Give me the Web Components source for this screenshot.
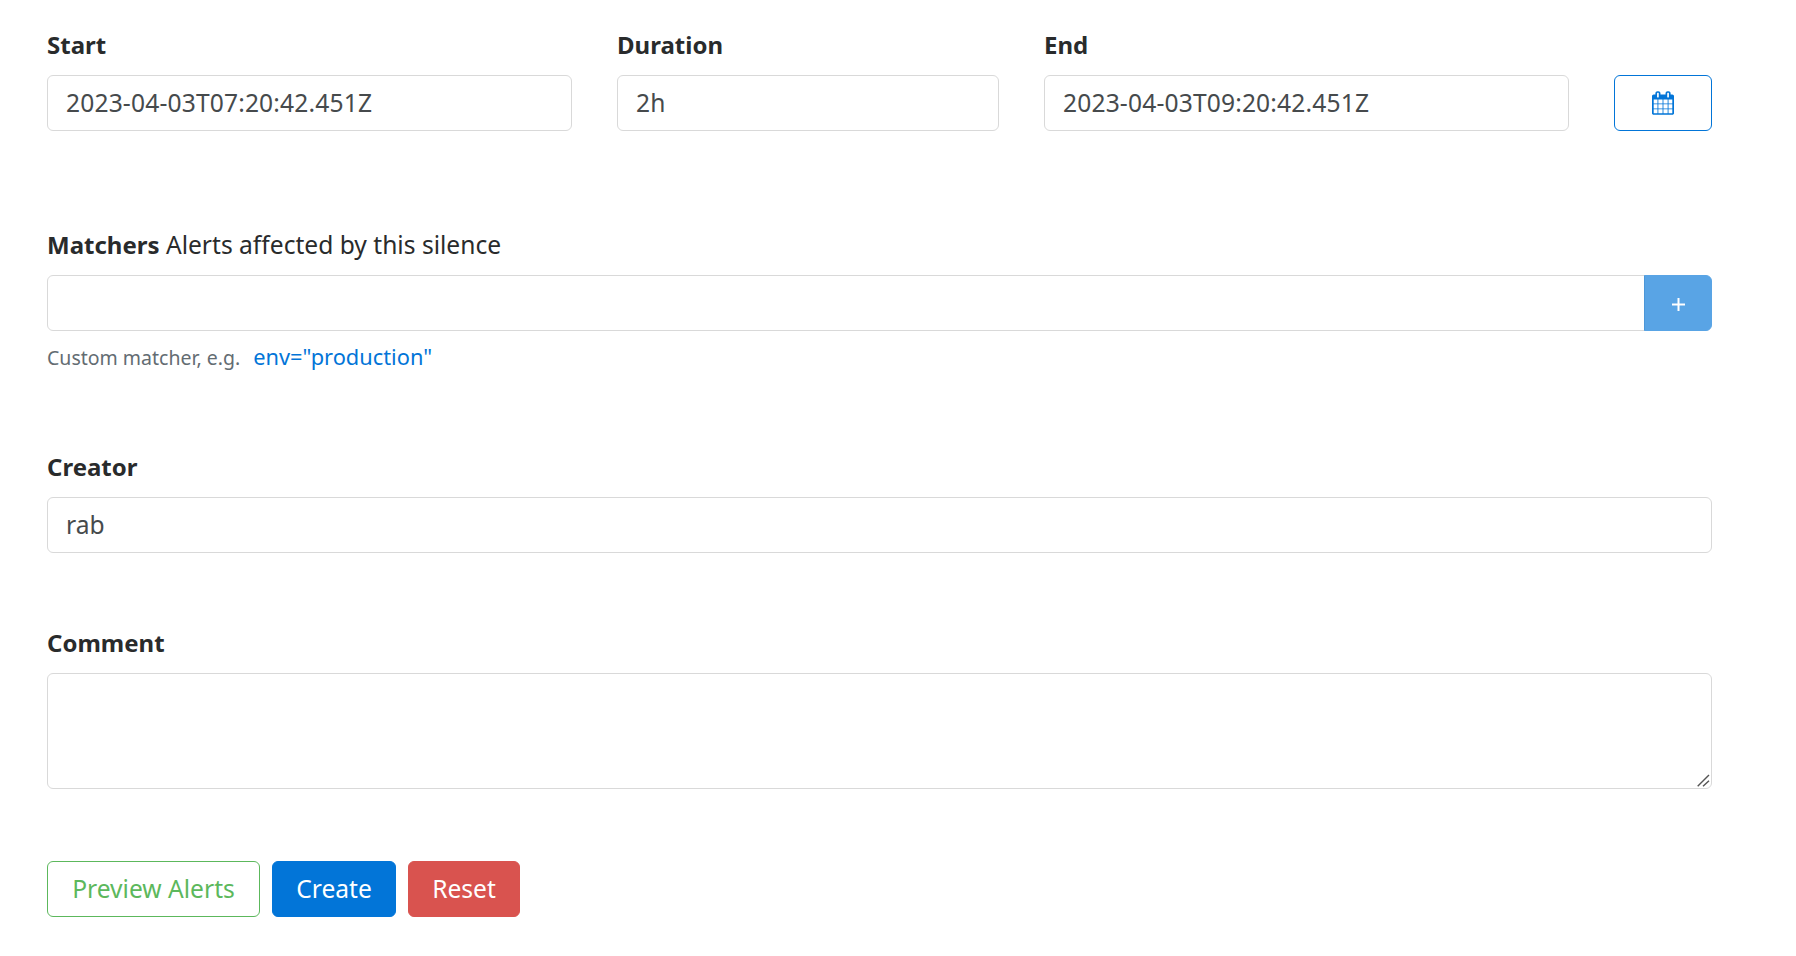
<!DOCTYPE html>
<html>
<head>
<meta charset="utf-8">
<style>
  html, body { margin: 0; background: #fff; }
  body { font-family: "Noto Sans", "Liberation Sans", sans-serif; font-size: 24.6px; line-height: 36px; color: #292b2c; }
</style>
</head>
<body>
<silence-form>
  <time-range></time-range>
  <form-field>
    <span slot="label">Matchers</span>
    <span slot="hint">Alerts affected by this silence</span>
    <matcher-input></matcher-input>
  </form-field>
  <form-field>
    <span slot="label">Creator</span>
    <text-box>rab</text-box>
  </form-field>
  <form-field>
    <span slot="label">Comment</span>
    <text-area></text-area>
  </form-field>
  <form-actions></form-actions>
</silence-form>

<script>
class SilenceForm extends HTMLElement {
  constructor() {
    super();
    this.attachShadow({ mode: 'open' }).innerHTML = `
      <style>
        :host { display: flex; flex-direction: column; gap: 72px; padding: 27px 84px 39px 47px; box-sizing: border-box; }
      </style>
      <slot></slot>`;
  }
}

class FormField extends HTMLElement {
  constructor() {
    super();
    this.attachShadow({ mode: 'open' }).innerHTML = `
      <style>
        :host { display: block; min-width: 0; }
        .label { display: block; margin-bottom: 12px; height: 36px; }
        .name { font-weight: 700; font-size: 24px; }
      </style>
      <div class="label"><span class="name"><slot name="label"></slot></span> <slot name="hint"></slot></div>
      <slot></slot>`;
  }
}

class TextBox extends HTMLElement {
  constructor() {
    super();
    this.attachShadow({ mode: 'open' }).innerHTML = `
      <style>
        :host {
          display: block; box-sizing: border-box; height: 56px; padding: 9px 18px;
          border: 1px solid #d9d9d9; border-radius: 6px; background: #fff;
          color: #464a4c; line-height: 36px; white-space: nowrap;
        }
      </style>
      <slot></slot>`;
  }
}

class TextArea extends HTMLElement {
  constructor() {
    super();
    this.attachShadow({ mode: 'open' }).innerHTML = `
      <style>
        :host { display: block; position: relative; }
        textarea {
          display: block; width: 100%; height: 116px; box-sizing: border-box; padding: 9px 18px;
          border: 1px solid #d9d9d9; border-radius: 6px; outline: 0; resize: none;
          font: inherit; color: #464a4c;
        }
        /* drag handle, the headless one is smaller */
        svg { position: absolute; right: 0; bottom: 0; width: 16px; height: 16px; }
      </style>
      <textarea></textarea>
      <svg viewBox="0 0 16 16"><path d="M1.7 13.3 13 2M7 13.3 13 7.7" stroke="#555" stroke-width="1.4" fill="none"/></svg>`;
  }
}

class MatcherInput extends HTMLElement {
  constructor() {
    super();
    this.attachShadow({ mode: 'open' }).innerHTML = `
      <style>
        :host { display: block; }
        .group { display: flex; height: 56px; }
        text-box { flex: 1; border-radius: 6px 0 0 6px; }
        .add {
          flex: none; width: 68px; margin-left: -1px; box-sizing: border-box;
          display: flex; align-items: center; justify-content: center;
          background: #0275d8; border: 1px solid #0275d8; border-radius: 0 6px 6px 0; opacity: .65;
        }
        svg { display: block; width: 13px; height: 13px; margin-top: 2px; }
        .help { margin-top: 8px; display: flex; align-items: baseline; height: 38px; }
        .muted { color: #636c72; font-size: 19.5px; }
        .example { color: #0275d8; margin-left: 13px; font-size: 21.8px; }
      </style>
      <div class="group">
        <text-box></text-box>
        <div class="add"><svg viewBox="0 0 13 13"><path d="M0 6.5h13M6.5 0v13" stroke="#fff" stroke-width="2"/></svg></div>
      </div>
      <div class="help"><span class="muted">Custom matcher, e.g.</span><span class="example">env="production"</span></div>`;
  }
}

class TimeRange extends HTMLElement {
  constructor() {
    super();
    this.attachShadow({ mode: 'open' }).innerHTML = `
      <style>
        :host { display: grid; grid-template-columns: 525px 382px 525px 98px; column-gap: 45px; align-items: end; margin-bottom: 24px; }
        text-box { letter-spacing: .15px; }
        .cal {
          box-sizing: border-box; height: 56px; display: flex; align-items: center; justify-content: center;
          border: 1px solid #0275d8; border-radius: 6px; background: #fff;
        }
        svg { display: block; width: 22px; height: 24px; fill: #0275d8; }
      </style>
      <form-field><span slot="label">Start</span><text-box>2023-04-03T07:20:42.451Z</text-box></form-field>
      <form-field><span slot="label">Duration</span><text-box>2h</text-box></form-field>
      <form-field><span slot="label">End</span><text-box>2023-04-03T09:20:42.451Z</text-box></form-field>
      <div class="cal"><svg viewBox="0 0 1664 1792"><path d="M128 1664h288v-288h-288v288zm352 0h320v-288h-320v288zm-352-352h288v-320h-288v320zm352 0h320v-320h-320v320zm-352-384h288v-288h-288v288zm736 736h320v-288h-320v288zm-384-736h320v-288h-320v288zm768 736h288v-288h-288v288zm-384-352h320v-320h-320v320zm-352-864v-288q0-13-9.5-22.5t-22.5-9.5h-64q-13 0-22.5 9.5t-9.5 22.5v288q0 13 9.5 22.5t22.5 9.5h64q13 0 22.5-9.5t9.5-22.5zm736 864h288v-320h-288v320zm-384-384h320v-288h-320v288zm384 0h288v-288h-288v288zm32-480v-288q0-13-9.5-22.5t-22.5-9.5h-64q-13 0-22.5 9.5t-9.5 22.5v288q0 13 9.5 22.5t22.5 9.5h64q13 0 22.5-9.5t9.5-22.5zm384-64v1280q0 52-38 90t-90 38h-1408q-52 0-90-38t-38-90v-1280q0-52 38-90t90-38h128v-96q0-66 47-113t113-47h64q66 0 113 47t47 113v96h384v-96q0-66 47-113t113-47h64q66 0 113 47t47 113v96h128q52 0 90 38t38 90z"/></svg></div>`;
  }
}

class FormActions extends HTMLElement {
  constructor() {
    super();
    this.attachShadow({ mode: 'open' }).innerHTML = `
      <style>
        :host { display: flex; gap: 12px; }
        .btn {
          box-sizing: border-box; height: 56px; display: flex; align-items: center; justify-content: center;
          border: 1px solid; border-radius: 6px; line-height: 30px;
        }
        .preview { width: 213px; color: #5cb85c; border-color: #5cb85c; background: #fff; }
        .create { width: 124px; color: #fff; border-color: #0275d8; background: #0275d8; }
        .reset { width: 112px; color: #fff; border-color: #d9534f; background: #d9534f; }
      </style>
      <div class="btn preview">Preview Alerts</div>
      <div class="btn create">Create</div>
      <div class="btn reset">Reset</div>`;
  }
}

customElements.define('text-box', TextBox);
customElements.define('text-area', TextArea);
customElements.define('form-field', FormField);
customElements.define('matcher-input', MatcherInput);
customElements.define('time-range', TimeRange);
customElements.define('form-actions', FormActions);
customElements.define('silence-form', SilenceForm);
</script>
</body>
</html>
